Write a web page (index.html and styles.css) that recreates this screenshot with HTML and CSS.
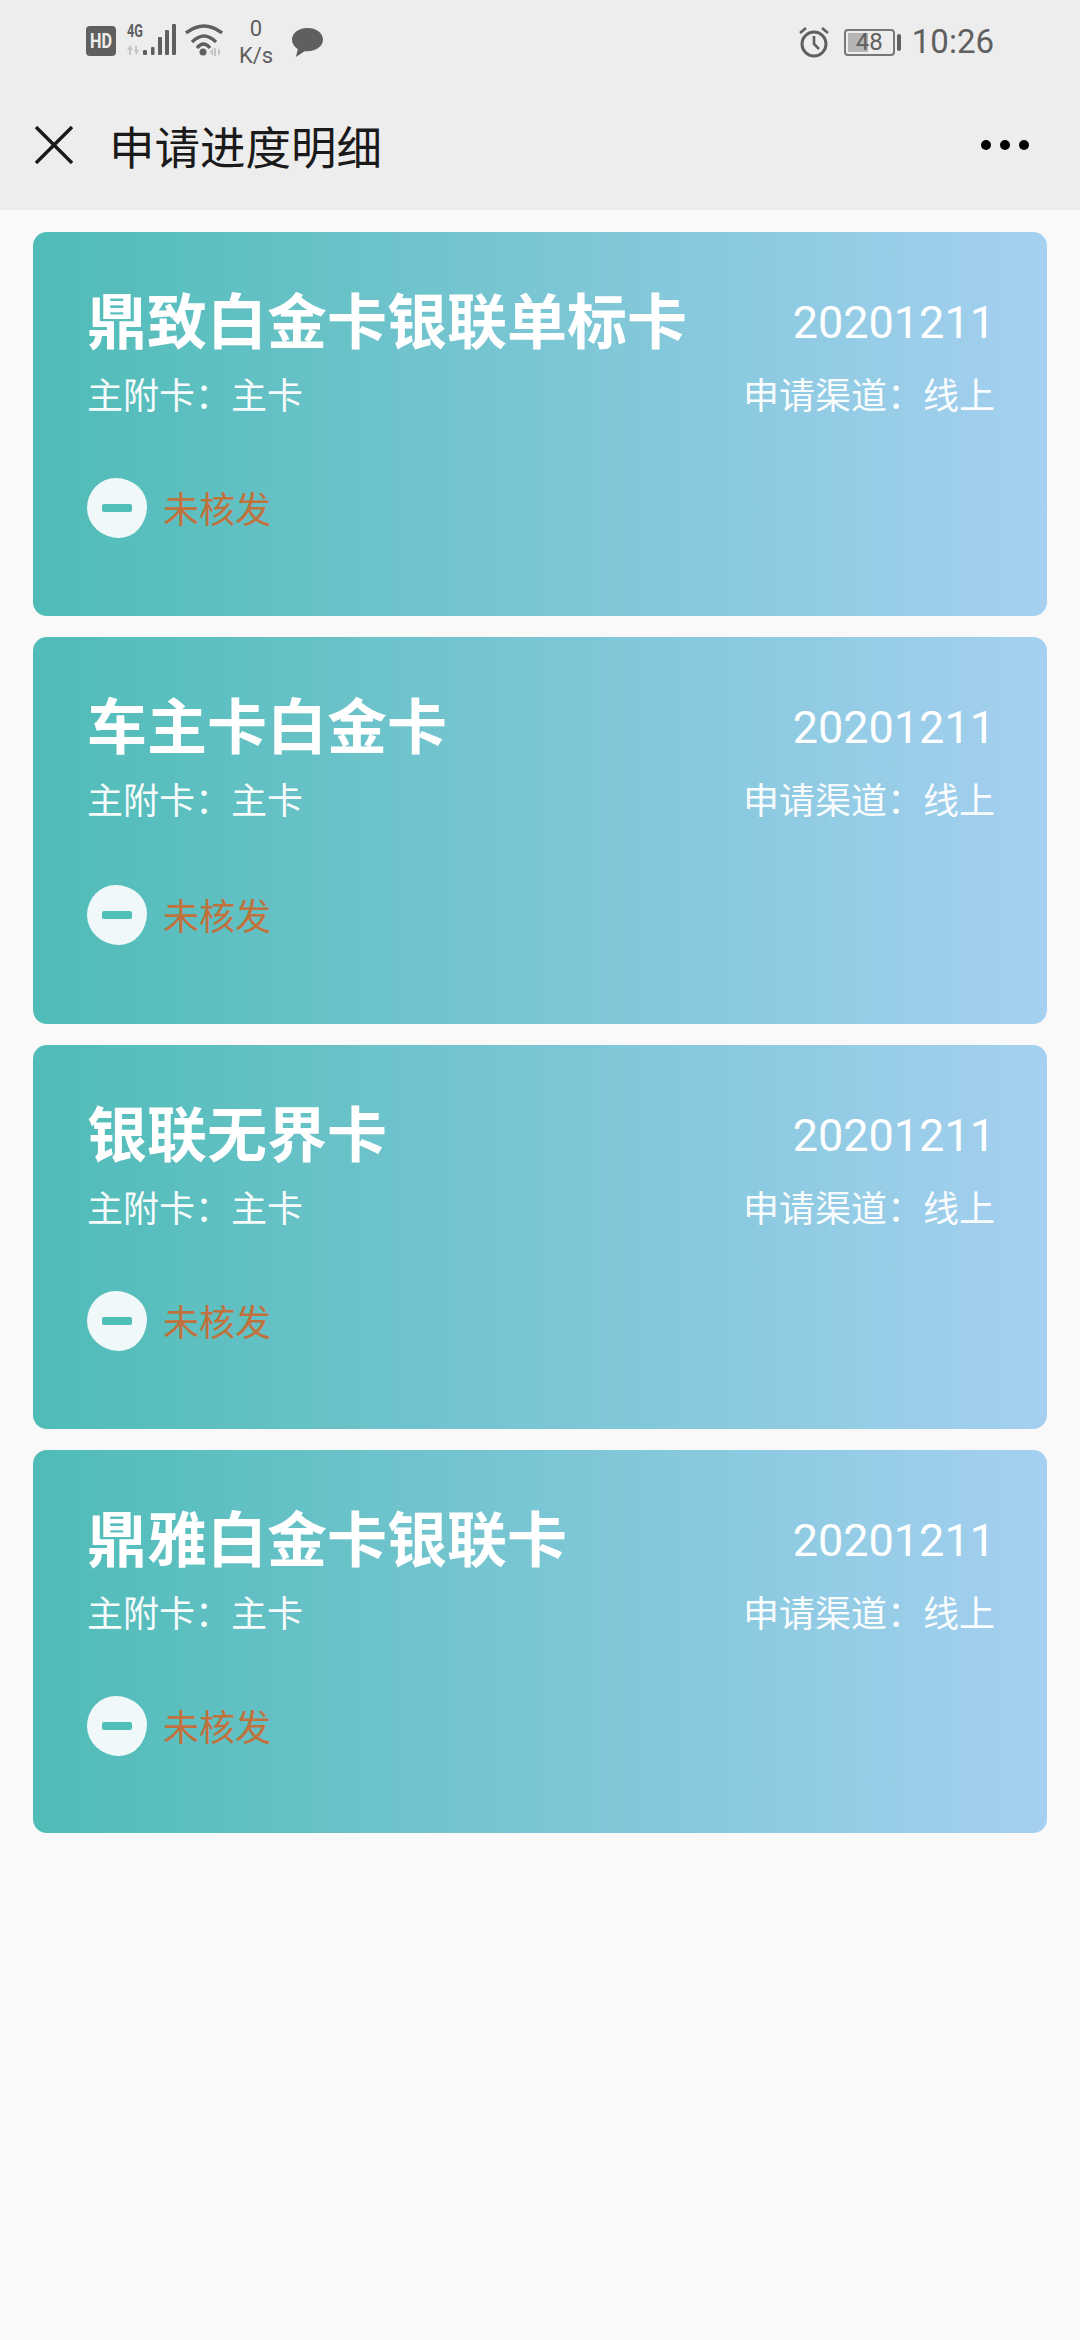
FILE: index.html
```html
<!DOCTYPE html>
<html lang="zh">
<head>
  <meta charset="UTF-8">
  <title>申请进度明细</title>
  <link rel="stylesheet" href="styles.css">
</head>
<body>
  <header class="topbar">
    <div class="statusbar">
      <div class="status-left">
        <svg class="ic-hd" width="30" height="30" viewBox="0 0 30 30"><rect width="30" height="30" rx="4" fill="#5f5f5f"/><text x="4" y="22" textLength="22" lengthAdjust="spacingAndGlyphs" class="hd-text">HD</text></svg>
        <svg class="ic-signal" width="51" height="38" viewBox="0 -6 51 38">
          <text x="1" y="13" textLength="16" lengthAdjust="spacingAndGlyphs" class="g-text">4G</text>
          <path d="M1 26l3-5 3 5zM3 26h2v5H3zM9 22h2v5H9zM8 26h5l-2.5 5z" fill="#c4c4c4"/>
          <rect x="17" y="26" width="4" height="5" rx="1" fill="#5f5f5f"/>
          <rect x="25" y="23" width="3.5" height="8" rx="1" fill="#5f5f5f"/>
          <rect x="32" y="13" width="4" height="18" rx="1" fill="#5f5f5f"/>
          <rect x="39" y="6" width="4" height="25" rx="1" fill="#5f5f5f"/>
          <rect x="46" y="0" width="4" height="31" rx="1" fill="#5f5f5f"/>
        </svg>
        <svg class="ic-wifi" width="38" height="32" viewBox="0 0 38 32">
          <path d="M1 9Q19-5 37 9M7 18Q19 6 31 18M12 24Q18.5 16 25 24" stroke="#5f5f5f" stroke-width="3.4" fill="none"/>
          <circle cx="18" cy="28" r="3.5" fill="#5f5f5f"/>
          <path d="M25 28l3-4v8zM29 24h2v8h-2zM33 24l3 4-3 4z" fill="#c4c4c4"/>
        </svg>
        <div class="speed"><span>0</span><span>K/s</span></div>
        <svg class="ic-chat" width="33" height="31" viewBox="0 0 34 32"><path d="M17 1C8 1 1 6 1 13c0 4 2 7 6 10l-2 8 9-6h3c9 0 16-5 16-12S26 1 17 1z" fill="#5f5f5f"/></svg>
      </div>
      <div class="status-right">
        <svg class="ic-alarm" width="32" height="32" viewBox="0 0 32 32">
          <circle cx="16" cy="18" r="12" stroke="#5f5f5f" stroke-width="3" fill="none"/>
          <path d="M16 10v8l5 5M2 7l6-5M30 7l-6-5" stroke="#5f5f5f" stroke-width="2.6" fill="none"/>
        </svg>
        <div class="battery">
          <div class="battery-box"><div class="battery-fill" style="width:48%"></div><span class="battery-num">48</span></div>
          <div class="battery-tip"></div>
        </div>
        <span class="clock">10:26</span>
      </div>
    </div>
    <div class="navbar">
      <svg class="ic-close" width="38" height="38" viewBox="0 0 38 38"><path d="M1 1l36 36M37 1L1 37" stroke="#1a1a1a" stroke-width="3.4" fill="none"/></svg>
      <h1 class="nav-title">申请进度明细</h1>
      <div class="more"><i></i><i></i><i></i></div>
    </div>
  </header>

  <main class="list">
    <section class="card">
      <div class="card-head">
        <h2 class="card-name">鼎致白金卡银联单标卡</h2>
        <span class="card-date">20201211</span>
      </div>
      <div class="card-sub"><span>主附卡：主卡</span><span>申请渠道：线上</span></div>
      <div class="card-status">
        <span class="minus"><i></i></span>
        <span class="status-text">未核发</span>
      </div>
    </section>
    <section class="card card-tall">
      <div class="card-head">
        <h2 class="card-name">车主卡白金卡</h2>
        <span class="card-date">20201211</span>
      </div>
      <div class="card-sub"><span>主附卡：主卡</span><span>申请渠道：线上</span></div>
      <div class="card-status">
        <span class="minus"><i></i></span>
        <span class="status-text">未核发</span>
      </div>
    </section>
    <section class="card">
      <div class="card-head">
        <h2 class="card-name">银联无界卡</h2>
        <span class="card-date">20201211</span>
      </div>
      <div class="card-sub"><span>主附卡：主卡</span><span>申请渠道：线上</span></div>
      <div class="card-status">
        <span class="minus"><i></i></span>
        <span class="status-text">未核发</span>
      </div>
    </section>
    <section class="card card-last">
      <div class="card-head">
        <h2 class="card-name">鼎雅白金卡银联卡</h2>
        <span class="card-date">20201211</span>
      </div>
      <div class="card-sub"><span>主附卡：主卡</span><span>申请渠道：线上</span></div>
      <div class="card-status">
        <span class="minus"><i></i></span>
        <span class="status-text">未核发</span>
      </div>
    </section>
  </main>
</body>
</html>
```

FILE: styles.css
```css
* {
    box-sizing: border-box;
}
html, body {
    margin: 0;
    padding: 0;
}
body {
    width: 1080px;
    height: 2340px;
    background: #f9f9f9;
    font-family: Roboto, "Noto Sans CJK SC", sans-serif;
    overflow: hidden;
}
.topbar {
    height: 210px;
    background: #ededed;
}
.statusbar {
    height: 80px;
    padding: 24px 86px 0 86px;
    display: flex;
    justify-content: space-between;
    align-items: flex-start;
    color: #5f5f5f;
}
.status-left {
    display: flex;
    align-items: flex-start;
}
.ic-hd {
    margin-top: 2px;
}
.hd-text {
    font: bold 20px Roboto, sans-serif;
    fill: #ededed;
}
.ic-signal {
    margin-left: 10px;
    margin-top: -6px;
}
.g-text {
    font: bold 18px Roboto, sans-serif;
    fill: #5f5f5f;
}
.ic-wifi {
    margin-left: 8px;
}
.speed {
    margin-left: 14px;
    width: 38px;
    margin-top: -9px;
    display: flex;
    flex-direction: column;
    align-items: center;
    font-size: 22px;
    line-height: 27px;
}
.ic-chat {
    margin-left: 16px;
    margin-top: 3px;
}
.status-right {
    display: flex;
    align-items: center;
}
.ic-alarm {
    margin-right: 14px;
}
.battery {
    display: flex;
    align-items: center;
    margin-right: 11px;
}
.battery-box {
    position: relative;
    width: 51px;
    height: 27px;
    border: 2px solid #777;
    border-radius: 4px;
    padding: 2px;
}
.battery-fill {
    height: 100%;
    background: #b5b5b5;
}
.battery-num {
    position: absolute;
    left: 0;
    right: 0;
    top: -2px;
    text-align: center;
    font-size: 24px;
    line-height: 27px;
}
.battery-tip {
    width: 4px;
    height: 17px;
    margin-left: 2px;
    background: #5f5f5f;
    border-radius: 2px;
}
.clock {
    font-size: 33px;
    line-height: 36px;
}
.navbar {
    height: 130px;
    padding: 0 51px 0 35px;
    display: flex;
    align-items: center;
}
.ic-close {
    flex: none;
}
.nav-title {
    margin: 0 0 0 36px;
    font-size: 45.5px;
    font-weight: 400;
    color: #1a1a1a;
    flex: 1;
}
.more {
    display: flex;
    gap: 9px;
}
.more i {
    width: 10px;
    height: 10px;
    border-radius: 50%;
    background: #000;
}
.list {
    padding: 22px 33px 0;
    display: flex;
    flex-direction: column;
    gap: 21px;
}
.card {
    height: 384px;
    padding: 52px 52px 0 54px;
    border-radius: 14px;
    background: linear-gradient(90deg, #4fbcb7, #a5d0f1);
    color: #fff;
}
.card-tall {
    height: 387px;
}
.card-tall .card-status {
    margin-top: 58px;
}
.card-last {
    height: 383px;
}
.card-head {
    display: flex;
    justify-content: space-between;
    align-items: center;
    height: 80px;
}
.card-name {
    margin: 0;
    font-size: 60px;
    font-weight: 700;
    line-height: 80px;
}
.card-date {
    font-size: 45px;
    margin-bottom: 4px;
}
.card-sub {
    display: flex;
    justify-content: space-between;
    margin-top: 8px;
    font-size: 36px;
    line-height: 50px;
    opacity: .95;
}
.card-status {
    display: flex;
    align-items: center;
    margin-top: 56px;
}
.minus {
    width: 60px;
    height: 60px;
    border-radius: 48% 52% 46% 54% / 50% 47% 53% 50%;
    background: #f0f8f9;
    display: flex;
    align-items: center;
    justify-content: center;
}
.minus i {
    width: 30px;
    height: 8px;
    border-radius: 2px;
    background: #50bfb8;
}
.status-text {
    margin-left: 16px;
    margin-top: -2px;
    font-size: 36px;
    color: #c0713c;
}
```
